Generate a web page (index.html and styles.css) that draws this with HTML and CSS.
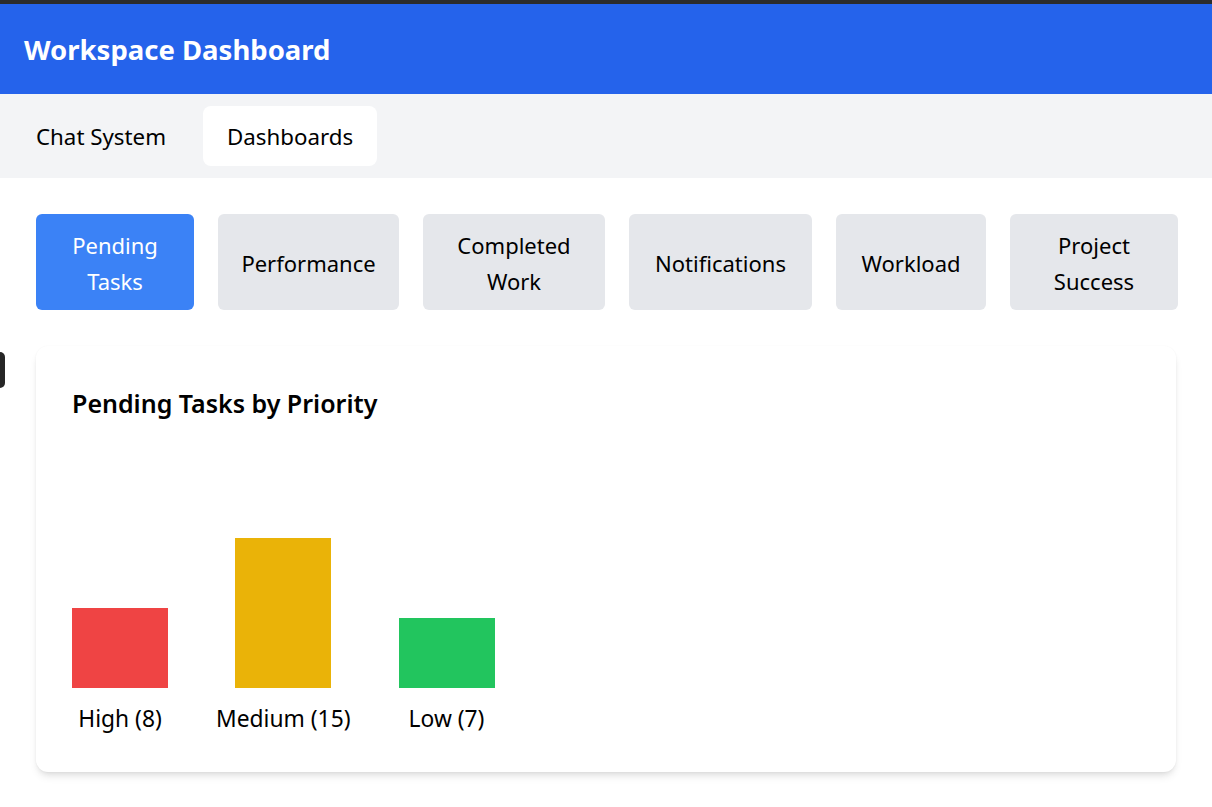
FILE: index.html
```html
<!DOCTYPE html>
<html lang="en">
<head>
<meta charset="utf-8">
<title>Workspace Dashboard</title>
<link rel="stylesheet" href="styles.css">
</head>
<body>
<div class="topline"></div>
<header class="header">
  <h1 class="title">Workspace Dashboard</h1>
</header>
<nav class="nav">
  <button class="nav-tab">Chat System</button>
  <button class="nav-tab nav-tab-active">Dashboards</button>
</nav>
<main class="main">
  <div class="subtabs">
    <button class="subtab subtab-active">Pending Tasks</button>
    <button class="subtab">Performance</button>
    <button class="subtab">Completed Work</button>
    <button class="subtab">Notifications</button>
    <button class="subtab">Workload</button>
    <button class="subtab">Project Success</button>
  </div>
  <section class="card">
    <h2 class="card-title">Pending Tasks by Priority</h2>
    <div class="chart">
      <div class="col">
        <div class="bar bar-high" style="height:80px"></div>
        <div class="label">High (8)</div>
      </div>
      <div class="col">
        <div class="bar bar-medium" style="height:150px"></div>
        <div class="label">Medium (15)</div>
      </div>
      <div class="col">
        <div class="bar bar-low" style="height:70px"></div>
        <div class="label">Low (7)</div>
      </div>
    </div>
  </section>
</main>
<div class="side-handle"></div>
</body>
</html>
```
FILE: styles.css
```css
* { box-sizing: border-box; }
html, body { margin: 0; padding: 0; background: #ffffff; }
body {
  font-family: "Noto Sans", "Open Sans", sans-serif;
  color: #000000;
  position: relative;
  min-height: 807px;
}
.topline { height: 4px; background: #2c2c2c; }
.header {
  background: #2563eb;
  padding: 25px 24px 23px;
}
.title {
  margin: 0;
  color: #ffffff;
  font-size: 27.5px;
  line-height: 42px;
  font-weight: 700;
}
.nav {
  background: #f3f4f6;
  padding: 12px;
  display: flex;
  gap: 13px;
}
.nav-tab {
  font-family: inherit;
  font-size: 22.3px;
  line-height: 36px;
  padding: 13px 24px 11px;
  border: 0;
  border-radius: 8px;
  background: transparent;
  color: #000;
}
.nav-tab-active { background: #ffffff; }
.main { padding: 36px; }
.subtabs {
  display: grid;
  grid-template-columns: 158px 181px 182px 183px 150px 168px;
  gap: 24px;
  margin-bottom: 36px;
}
.subtab {
  font-family: inherit;
  font-size: 22px;
  line-height: 36px;
  padding: 13px 20px 11px;
  border: 0;
  border-radius: 6px;
  background: #e5e7eb;
  color: #000;
  text-align: center;
}
.subtab-active { background: #3b82f6; color: #ffffff; }
.card {
  background: #ffffff;
  border-radius: 12px;
  padding: 36px;
  box-shadow: 0 6px 9px -2px rgba(0,0,0,0.1), 0 3px 6px -3px rgba(0,0,0,0.1), 0 0 2px rgba(0,0,0,0.04);
}
.card-title {
  margin: 0 0 24px 0;
  padding-top: 1px;
  font-size: 25px;
  line-height: 41px;
  font-weight: 600;
}
.chart {
  height: 288px;
  display: flex;
  align-items: flex-end;
  gap: 48px;
}
.col {
  display: flex;
  flex-direction: column;
  align-items: center;
  min-width: 96px;
}
.bar { width: 96px; }
.bar-high { background: #ef4444; }
.bar-medium { background: #eab308; }
.bar-low { background: #22c55e; }
.label {
  margin-top: 14px;
  font-size: 22.8px;
  line-height: 34px;
}
.side-handle {
  position: absolute;
  left: -10px;
  top: 352px;
  width: 15px;
  height: 36px;
  background: #262626;
  border-radius: 5px;
}
```
